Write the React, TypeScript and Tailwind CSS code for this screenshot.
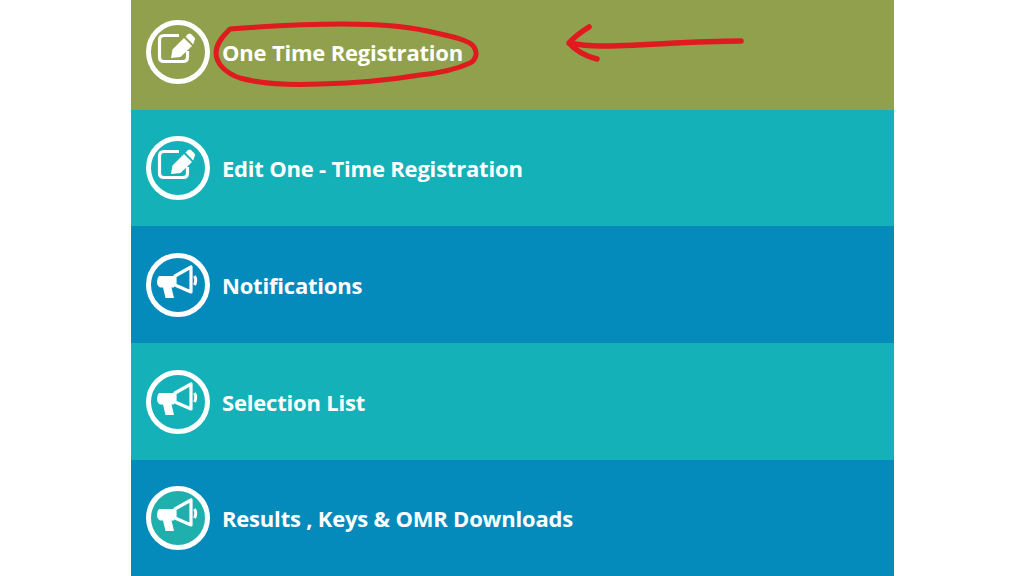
type Row = {
  label: string;
  rowClass: string;
  icon: 'edit' | 'horn';
  circleClass?: string;
};

const rows: Row[] = [
  { label: 'One Time Registration', rowClass: 'h-[110px] bg-[#90a04c] pb-[7px]', icon: 'edit' },
  { label: 'Edit One - Time Registration', rowClass: 'h-[116px] bg-[#15b1b8]', icon: 'edit' },
  { label: 'Notifications', rowClass: 'h-[117px] bg-[#058bbb]', icon: 'horn' },
  { label: 'Selection List', rowClass: 'h-[117px] bg-[#15b1b8]', icon: 'horn' },
  { label: 'Results , Keys & OMR Downloads', rowClass: 'h-[116px] bg-[#058bbb]', icon: 'horn', circleClass: 'bg-[#1fb0ae]' },
];

function EditIcon() {
  return (
    <svg className="h-[54px] w-[54px]" viewBox="5 5 54 54" fill="none">
      <path d="M33 15.5H18Q13.5 15.5 13.5 20V37Q13.5 41.5 18 41.5H37Q41.5 41.5 41.5 37V31" stroke="white" strokeWidth="3.2" />
      <path d="M25 38L26.5 29.5L38 18L46 26L34.5 37Z" fill="white" />
      <path d="M39.5 16.5L42 14Q43.5 12.8 45 14L48.5 17.5Q49.8 19 48.5 20.5L47.2 24.5Z" fill="white" />
    </svg>
  );
}

function HornIcon() {
  return (
    <svg className="h-[54px] w-[54px]" viewBox="5 5 54 54" fill="none">
      <path d="M13 23H28V34.5H25.5L28 45H19.5L17 34.5H14Q11 33 11 28.5Q11 25 13 23Z" fill="white" />
      <path d="M29 23L45 14V39L29 32Z" stroke="white" strokeWidth="3.2" strokeLinejoin="round" />
      <path d="M48.5 23Q51 27 48.5 32" stroke="white" strokeWidth="3" />
    </svg>
  );
}

function MenuRow({ label, rowClass, icon, circleClass }: Row) {
  return (
    <div className={`flex items-center pl-[15px] ${rowClass}`}>
      <div className={`flex h-[64px] w-[64px] shrink-0 items-center justify-center rounded-full border-[5px] border-white ${circleClass ?? ''}`}>
        {icon === 'edit' ? <EditIcon /> : <HornIcon />}
      </div>
      <span className="mt-[1px] ml-[12px] text-[22px] font-bold tracking-[-0.2px] text-white">{label}</span>
    </div>
  );
}

export default function App() {
  return (
    <div className="relative h-[576px] w-[1024px] overflow-hidden bg-white font-['Open_Sans',sans-serif]">
      <div className="ml-[131px] w-[763px]">
        {rows.map((row) => (
          <MenuRow key={row.label} {...row} />
        ))}
      </div>

      {/* red marker annotations */}
      <svg className="absolute left-0 top-0 h-[576px] w-[1024px]" viewBox="0 0 1024 576" fill="none" stroke="#e01b1f" strokeLinecap="round" strokeLinejoin="round">
        <path
          d="M230 29 C270 26 310 24 343 24 C375 24 405 26 427 31 C450 36 470 40 474 47 C478 53 476 60 470 63 C455 70 440 73 420 75 C390 80 360 83 320 84 C295 85 265 85 240 78 C225 73 216 63 216 53 C216 44 222 37 229 30"
          strokeWidth="5"
        />
        <path d="M741 41 C690 41 640 46 600 46 C590 46 580 45 569 43 M589 27 C581 32 574 37 569 43 C575 50 585 56 597 59" strokeWidth="5.5" />
      </svg>
    </div>
  );
}
